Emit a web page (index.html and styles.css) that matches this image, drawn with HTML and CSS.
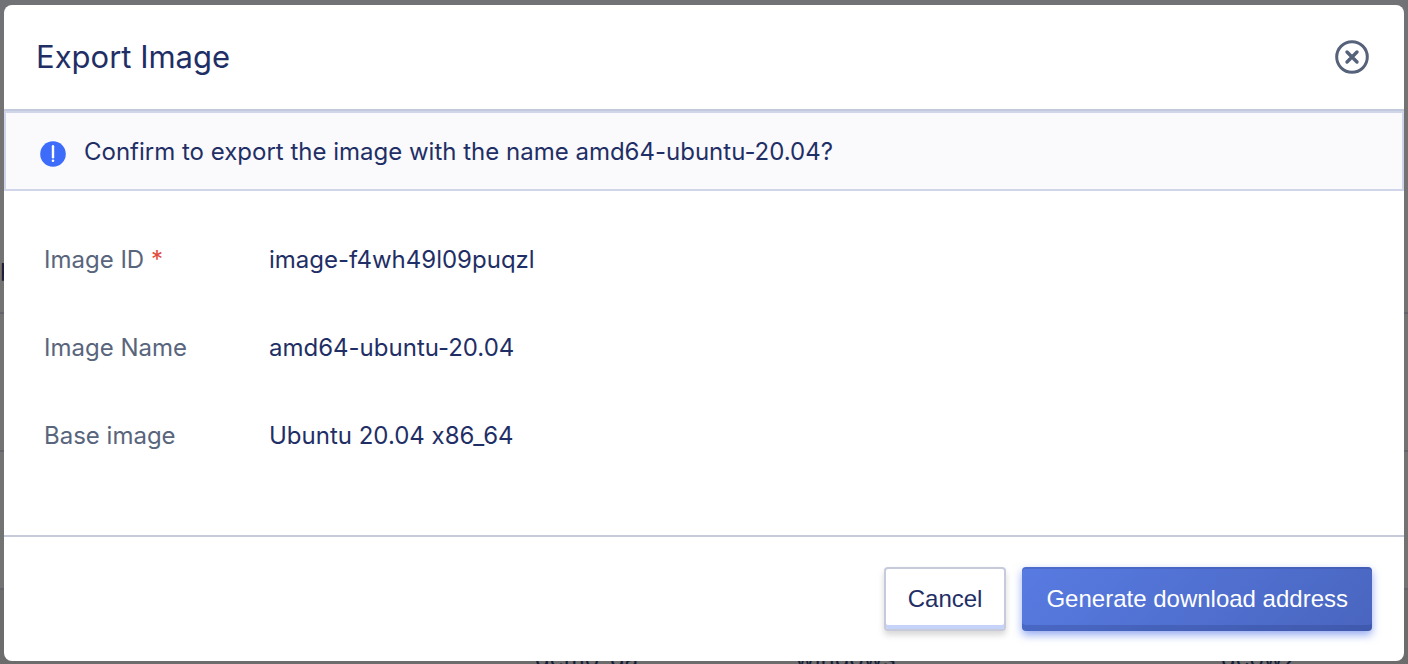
FILE: index.html
```html
<!DOCTYPE html>
<html lang="en">
<head>
<meta charset="utf-8">
<title>Export Image</title>
<link rel="stylesheet" href="styles.css">
</head>
<body>
<div class="page" aria-hidden="true">
  <div class="page-bar"></div>
  <div class="page-row page-row-first"><span>p</span></div>
  <div class="page-row"></div>
  <div class="page-row"></div>
  <div class="page-row page-row-last"><span></span><span>demo_ga</span><span>windows</span><span>qcow2</span></div>
</div>
<div class="overlay">
  <section class="dialog" role="dialog" aria-modal="true" aria-labelledby="dialog-title">
    <header class="dialog-header">
      <h1 class="dialog-title" id="dialog-title">Export Image</h1>
      <button class="close" type="button" aria-label="Close">
        <svg width="34" height="34" viewBox="0 0 34 34" fill="none" stroke="currentColor" aria-hidden="true">
          <circle cx="17" cy="17" r="15.3" stroke-width="3"/>
          <path d="M12 12l10 10M22 12L12 22" stroke-width="3.4" stroke-linecap="round"/>
        </svg>
      </button>
    </header>
    <div class="notice">
      <svg class="notice-icon" width="26" height="26" viewBox="0 0 26 26" aria-hidden="true">
        <circle cx="13" cy="13" r="12.8" fill="#3d6cfa"/>
        <path d="M13 5.2v11" stroke="#fff" stroke-width="2.4" stroke-linecap="round"/>
        <circle cx="13" cy="19.8" r="1.3" fill="#fff"/>
      </svg>
      <p class="notice-text">Confirm to export the image with the name amd64-ubuntu-20.04?</p>
    </div>
    <dl class="details">
      <dt>Image ID <span class="required">*</span></dt><dd>image-f4wh49l09puqzl</dd>
      <dt>Image Name</dt><dd>amd64-ubuntu-20.04</dd>
      <dt>Base image</dt><dd>Ubuntu 20.04 x86_64</dd>
    </dl>
    <footer class="dialog-footer">
      <button class="button button-default" type="button">Cancel</button>
      <button class="button button-primary" type="button">Generate download address</button>
    </footer>
  </section>
</div>
</body>
</html>
```
FILE: styles.css
```css
* { box-sizing: border-box; }

body {
  margin: 0;
  height: 100vh;
  overflow: hidden;
  position: relative;
  background: #717171;
  color: #1f2f66;
  font-family: Inter, "Liberation Sans", sans-serif;
  font-size: 24px;
  line-height: 32px;
  font-feature-settings: "calt" 0;
}

.page {
  height: 100%;
  overflow: hidden;
  background: #737373;
  color: #151d38;
}
.page-bar { height: 40px; background: #717276; }
.page-row { height: 138px; border-bottom: 2px solid #62636b; }
.page-row-first { height: 274px; padding-top: 212px; }
.page-row-last {
  display: grid;
  grid-template-columns: 535fr 260fr 426fr 187fr;
  padding-top: 53px;
  background: #6c6c6c;
}

.overlay {
  position: absolute;
  inset: 0;
  display: flex;
  padding: 5px 4px 3px;
}
.dialog {
  flex: 1;
  display: flex;
  flex-direction: column;
  background: #fff;
  border-radius: 8px;
}
.dialog-header {
  display: flex;
  align-items: center;
  justify-content: space-between;
  padding: 32px 35px 32px 32px;
  border-bottom: 2px solid #c3c9dc;
}
.dialog-title {
  margin: 0;
  font-size: 31px;
  line-height: 40px;
  font-weight: 400;
}
.close {
  display: flex;
  padding: 0;
  border: 0;
  background: none;
  color: #56627a;
}
.notice {
  display: flex;
  align-items: center;
  gap: 18px;
  padding: 23px 34px 21px;
  border: 2px solid #d1d5e9;
  background: #fafafd;
}
.notice-icon { margin-top: 4px; }
.notice-text { margin: 0; }

.details {
  flex: 1;
  display: grid;
  grid-template-columns: 225px 1fr;
  align-content: start;
  row-gap: 56px;
  margin: 0;
  padding: 53px 40px;
}
.details dt { color: #59657c; }
.details dd { margin: 0; }
.required { color: #e24a3b; }

.dialog-footer {
  display: flex;
  justify-content: flex-end;
  gap: 16px;
  padding: 30px 32px;
  border-top: 2px solid #c6cadb;
}
.button {
  height: 64px;
  border: 2px solid #c6cadb;
  border-radius: 4px;
  padding: 0 22px;
  font: 24px/56px "Liberation Sans", Arial, sans-serif;
  color: #1f2f66;
}
.button-default {
  background: #fff;
  box-shadow: inset 0 -4px #c4d3f7, 0 4px 6px rgba(0, 0, 0, .16);
}
.button-primary {
  padding: 0 24px;
  border: 0;
  color: #fff;
  background: linear-gradient(135deg, #587be2, #4965bf);
  box-shadow: inset 0 2px rgba(35, 55, 120, .2), inset 0 -6px rgba(35, 55, 120, .25), 0 4px 8px rgba(61, 100, 230, .55);
}
```
